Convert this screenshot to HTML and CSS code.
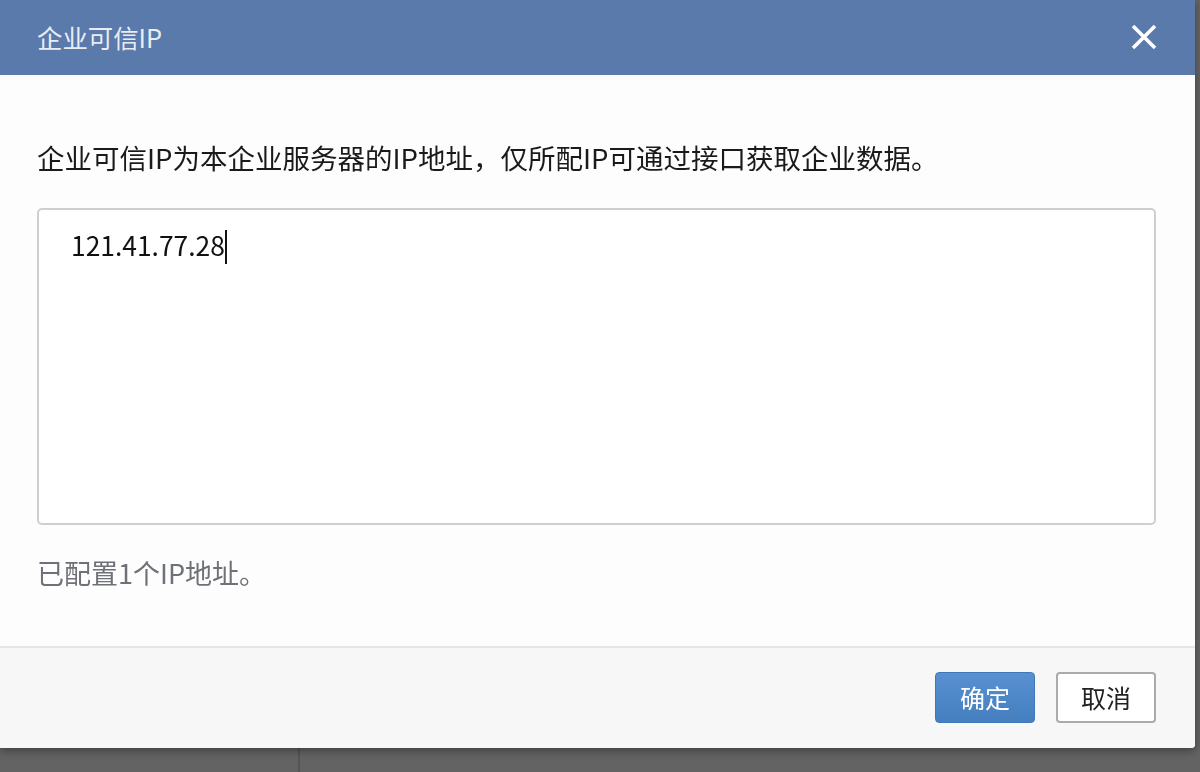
FILE: index.html
```html
<!DOCTYPE html>
<html lang="zh-CN">
<head>
    <meta charset="UTF-8">
    <meta name="viewport" content="width=device-width, initial-scale=1.0">
    <title>企业可信IP</title>
    <link rel="stylesheet" href="styles.css">
</head>
<body>
    <div class="page">
        <div class="sidebar"></div>
        <div class="main"></div>
    </div>

    <div class="modal">
        <div class="modal-header">
            <span class="modal-title">企业可信IP</span>
            <button class="close-btn" aria-label="关闭">
                <svg width="26" height="26" viewBox="0 0 26 26">
                    <path d="M2 2 L24 24 M24 2 L2 24" stroke="#ffffff" stroke-width="3.6" fill="none"/>
                </svg>
            </button>
        </div>
        <div class="modal-body">
            <p class="desc">企业可信IP为本企业服务器的IP地址，仅所配IP可通过接口获取企业数据。</p>
            <div class="ip-input">121.41.77.28<span class="caret"></span></div>
            <p class="count">已配置1个IP地址。</p>
        </div>
        <div class="modal-footer">
            <button class="btn btn-primary">确定</button>
            <button class="btn btn-default">取消</button>
        </div>
    </div>
</body>
</html>
```

FILE: styles.css
```css
body {
    margin: 0;
    font-family: "Noto Sans CJK SC", "Noto Sans", sans-serif;
    background: #636363;
    height: 772px;
    overflow: hidden;
}

.page {
    display: flex;
    height: 772px;
}

.sidebar {
    width: 298px;
    border-right: 2px solid #555555;
}

.main {
    flex: 1;
}

.modal {
    position: fixed;
    top: 0;
    left: 0;
    width: 1195px;
    height: 748px;
    display: flex;
    flex-direction: column;
    background: #fdfdfd;
    border-radius: 0 0 4px 0;
    box-shadow: 0 3px 8px rgba(0, 0, 0, 0.35);
    overflow: hidden;
}

.modal-header {
    height: 75px;
    flex-shrink: 0;
    display: flex;
    align-items: center;
    justify-content: space-between;
    padding: 0 38px 0 37px;
    background: #5a7aab;
}

.modal-title {
    color: #e9edf3;
    font-size: 25.4px;
    margin-top: -2px;
}

.close-btn {
    background: none;
    border: none;
    padding: 0;
    width: 26px;
    height: 26px;
    cursor: pointer;
    margin-top: -2px;
}

.modal-body {
    flex: 1;
    padding: 0 39px 0 37px;
}

.desc {
    margin: 63px 0 0;
    font-size: 27.5px;
    line-height: 38px;
    color: #1a1a1a;
}

.ip-input {
    margin-top: 32px;
    height: 281px;
    padding: 16px 32px;
    background: #ffffff;
    border: 2px solid #cfcfcf;
    border-radius: 5px;
    font-size: 26.4px;
    line-height: 38px;
    color: #111111;
}

.caret {
    display: inline-block;
    width: 2px;
    height: 34px;
    background: #111111;
    vertical-align: -8px;
}

.count {
    margin: 29px 0 0;
    font-size: 27px;
    line-height: 38px;
    color: #6e7177;
}

.modal-footer {
    height: 102px;
    flex-shrink: 0;
    display: flex;
    justify-content: flex-end;
    align-items: center;
    gap: 21px;
    padding: 0 39px 2px;
    background: #f7f7f7;
    border-top: 2px solid #e4e4ea;
    box-sizing: border-box;
}

.btn {
    width: 100px;
    height: 51px;
    font-family: inherit;
    font-size: 25px;
    border-radius: 4px;
    cursor: pointer;
}

.btn-primary {
    color: #ffffff;
    background: linear-gradient(#5890d1, #457fbf);
    border: 1px solid #3f78b9;
}

.btn-default {
    color: #222222;
    background: #ffffff;
    border: 2px solid #ababab;
}
```
